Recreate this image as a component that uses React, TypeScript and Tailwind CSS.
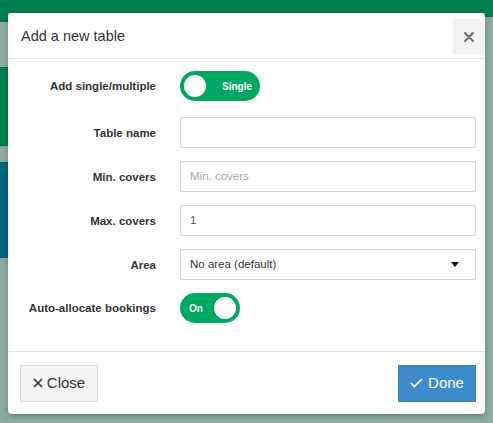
import React from "react";

const font = { fontFamily: '"Liberation Sans", Arial, sans-serif' };

function Row({ label, children }: { label: string; children: React.ReactNode }) {
  return (
    <div className="flex items-center">
      <div className="w-[148px] shrink-0 pt-[2px] text-right text-[11.5px] font-bold text-[#333]">{label}</div>
      <div className="ml-[24px] flex-1">{children}</div>
    </div>
  );
}

export default function App() {
  return (
    <div className="relative h-[423px] w-[493px] overflow-hidden bg-[#8eab9f]" style={font}>
      {/* background page under the overlay */}
      <div className="flex h-full flex-col">
        <div className="h-[13px] bg-[#007f4e]" />
        <div className="flex flex-1">
          <div className="flex w-[8px] flex-col">
            <div className="h-[9px] bg-[#007f4e]" />
            <div className="h-[45px] bg-[#8eab9f]" />
            <div className="h-[79px] bg-[#007f4e]" />
            <div className="h-[16px] bg-[#8eab9f]" />
            <div className="h-[96px] bg-[#00677c]" />
            <div className="flex-1 bg-[#8eab9f]" />
          </div>
          <div className="flex-1" />
          <div className="flex w-[8px] flex-col">
            <div className="h-[4px] bg-[#007f4e]" />
            <div className="flex-1 bg-[#8eab9f]" />
          </div>
        </div>
      </div>

      {/* modal */}
      <div className="absolute left-[8px] top-[13px] flex h-[401px] w-[477px] flex-col rounded-[4px] bg-white shadow-[0_2px_6px_rgba(0,0,0,0.25)]">
        <div className="flex h-[46px] items-start justify-between border-b border-[#e3e3e3]">
          <div className="pl-[13px] pt-[13px] text-[14.5px] text-[#333]">Add a new table</div>
          <div className="mt-[6px] flex h-[35px] w-[32px] items-center justify-center rounded-tr-[4px] bg-[#f3f3f3]">
            <svg width="10" height="10" viewBox="0 0 10 10">
              <path d="M1 1L9 9M9 1L1 9" stroke="#666" strokeWidth="1.8" strokeLinecap="round" />
            </svg>
          </div>
        </div>

        <div className="flex flex-col gap-[13px] pl-[0px] pr-[9px] pt-[12px]">
          <Row label="Add single/multiple">
            <div className="flex h-[30px] w-[80px] items-center rounded-full bg-[#00a862] px-[4px]">
              <div className="h-[22px] w-[22px] rounded-full bg-white" />
              <div className="flex-1 pr-[4px] text-right text-[10px] font-bold text-white">Single</div>
            </div>
          </Row>
          <div className="mt-[3px]">
            <Row label="Table name">
              <div className="h-[31px] rounded-[2px] border border-[#d3d6dc] bg-white" />
            </Row>
          </div>
          <Row label="Min. covers">
            <div className="flex h-[31px] items-center rounded-[2px] border border-[#d3d6dc] bg-white px-[9px] text-[11.5px] text-[#a9a9a9]">
              Min. covers
            </div>
          </Row>
          <Row label="Max. covers">
            <div className="flex h-[31px] items-center rounded-[2px] border border-[#d3d6dc] bg-white px-[9px] text-[11.5px] text-[#555]">
              1
            </div>
          </Row>
          <Row label="Area">
            <div className="flex h-[31px] items-center justify-between rounded-[2px] border border-[#d3d6dc] bg-white pl-[9px] pr-[16px] text-[11.5px] text-[#333]">
              <span>No area (default)</span>
              <svg width="8" height="5" viewBox="0 0 8 5">
                <path d="M0 0H8L4 5Z" fill="#111" />
              </svg>
            </div>
          </Row>
          <Row label="Auto-allocate bookings">
            <div className="flex h-[30px] w-[60px] items-center rounded-full bg-[#00a862] px-[4px]">
              <div className="flex-1 pl-[5px] text-[10px] font-bold text-white">On</div>
              <div className="h-[22px] w-[22px] rounded-full bg-white" />
            </div>
          </Row>
        </div>

        <div className="mt-auto flex h-[63px] items-center justify-between border-t border-[#e3e3e3] pl-[12px] pr-[9px]">
          <div className="flex h-[37px] w-[78px] items-center justify-center gap-[4px] border border-[#dcdcdc] bg-[#f3f3f3] text-[15px] text-[#333]">
            <svg width="10" height="10" viewBox="0 0 10 10">
              <path d="M1 1L9 9M9 1L1 9" stroke="#333" strokeWidth="1.7" />
            </svg>
            <span>Close</span>
          </div>
          <div className="flex h-[37px] w-[78px] items-center justify-center gap-[5px] border border-[#3a82bb] bg-[#3d8bca] text-[15px] text-white">
            <svg width="13" height="10" viewBox="0 0 13 10">
              <path d="M1 5L4.5 8.5L12 1" stroke="#fff" strokeWidth="1.6" fill="none" />
            </svg>
            <span>Done</span>
          </div>
        </div>
      </div>
    </div>
  );
}
